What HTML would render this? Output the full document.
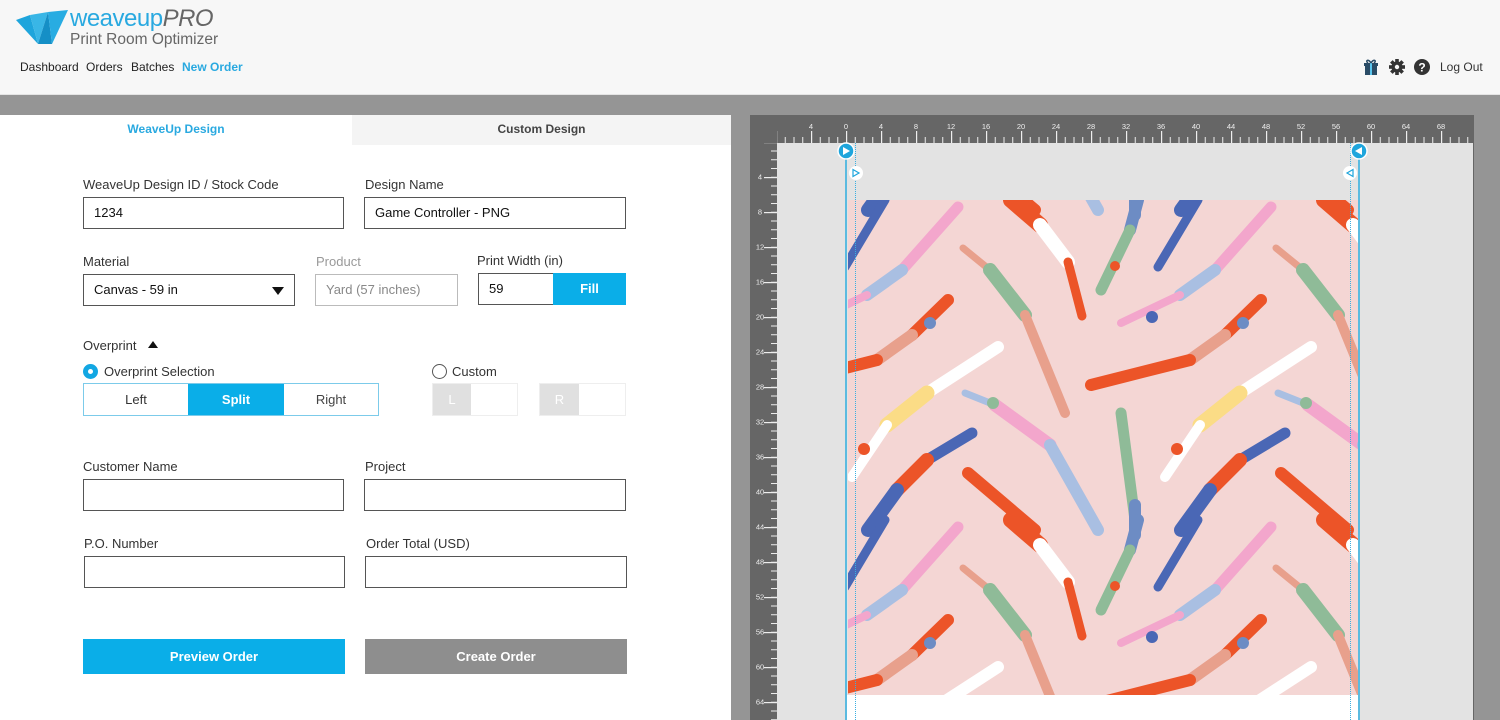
<!DOCTYPE html>
<html><head><meta charset="utf-8"><style>
*{box-sizing:border-box;margin:0;padding:0}
html,body{overflow:hidden}
body{width:1500px;height:720px;overflow:hidden;background:#959595;font-family:"Liberation Sans",Arial,sans-serif;position:relative;color:#333}
.a{position:absolute}
.hdr{left:0;top:0;width:1500px;height:95px;background:#f7f7f7;border-bottom:1px solid #e4e4e4}
.nav{top:60px;font-size:12px;color:#222}
.lp{left:0;top:115px;width:731px;height:605px;background:#fff}
.tab{top:115px;height:30px;font-size:12px;font-weight:bold;text-align:center;line-height:29px}
.lbl{font-size:13px;color:#333}
.in{border:1px solid #555;height:32px;background:#fff;font-size:13px;padding-left:10px;line-height:30px;color:#111}
.btn{height:35px;color:#fff;font-weight:bold;font-size:13px;text-align:center;line-height:35px}
</style></head><body>
<div class="a hdr"></div>
<svg class="a" style="left:14px;top:8px" width="56" height="40" viewBox="14 8 56 40">
<polygon points="16,20 30,15 38,44" fill="#1ea5dc"/>
<polygon points="30,15 48,12 38,44 " fill="#39b6e6"/>
<polygon points="38,44 48,12 52,44" fill="#158fc6"/>
<polygon points="48,12 68,10 52,44" fill="#28ace2"/>
</svg>
<div class="a" style="left:70px;top:6px;font-size:24px;line-height:26px;color:#29a9e0;letter-spacing:-0.5px">weaveup<i style="color:#666">PRO</i></div>
<div class="a" style="left:70px;top:31px;font-size:15.5px;line-height:18px;color:#666">Print Room Optimizer</div>
<div class="a nav" style="left:20px">Dashboard</div>
<div class="a nav" style="left:86px">Orders</div>
<div class="a nav" style="left:131px">Batches</div>
<div class="a nav" style="left:182px;color:#29a9e0;font-weight:bold">New Order</div>
<svg class="a" style="left:1362px;top:58px" width="70" height="18" viewBox="0 0 70 18">
<rect x="2" y="5" width="14" height="3" fill="#2a4c66"/><rect x="3" y="8" width="12" height="9" fill="#2a4c66"/><rect x="8" y="5" width="2" height="12" fill="#5bc6ee"/><path d="M9 5 C6 0 3 3 6 5 M9 5 C12 0 15 3 12 5" stroke="#2a4c66" stroke-width="1.5" fill="none"/>
<g transform="translate(35,9)" fill="#333"><circle r="5.5"/><g id="t"><rect x="-1.8" y="-8" width="3.6" height="16"/></g><use href="#t" transform="rotate(45)"/><use href="#t" transform="rotate(90)"/><use href="#t" transform="rotate(135)"/><circle r="2.2" fill="#f7f7f7"/></g>
<circle cx="60" cy="9" r="8" fill="#333"/><text x="60" y="13.5" font-size="12" font-weight="bold" fill="#fff" text-anchor="middle" font-family="Liberation Sans">?</text>
</svg>
<div class="a" style="left:1440px;top:60px;font-size:12px;color:#333">Log Out</div>

<div class="a lp"></div>
<div class="a tab" style="left:0;width:352px;color:#29a9e0">WeaveUp Design</div>
<div class="a tab" style="left:352px;width:379px;background:#f4f4f4;color:#444">Custom Design</div>

<div class="a lbl" style="left:83px;top:177px">WeaveUp Design ID / Stock Code</div>
<div class="a in" style="left:83px;top:197px;width:261px">1234</div>
<div class="a lbl" style="left:365px;top:177px">Design Name</div>
<div class="a in" style="left:364px;top:197px;width:262px">Game Controller - PNG</div>

<div class="a lbl" style="left:83px;top:254px">Material</div>
<div class="a in" style="left:83px;top:274px;width:212px">Canvas - 59 in<span class="a" style="right:10px;top:12px;border-left:6px solid transparent;border-right:6px solid transparent;border-top:8px solid #111"></span></div>
<div class="a lbl" style="left:316px;top:254px;color:#999">Product</div>
<div class="a in" style="left:315px;top:274px;width:143px;border-color:#bbb;color:#888">Yard (57 inches)</div>
<div class="a lbl" style="left:477px;top:253px">Print Width (in)</div>
<div class="a in" style="left:478px;top:273px;width:76px">59</div>
<div class="a btn" style="left:553px;top:273px;width:73px;height:32px;line-height:32px;background:#0aaee8">Fill</div>

<div class="a lbl" style="left:83px;top:338px">Overprint</div>
<div class="a" style="left:148px;top:341px;border-left:5px solid transparent;border-right:5px solid transparent;border-bottom:7px solid #111"></div>
<div class="a" style="left:83px;top:364px;width:15px;height:15px;border-radius:50%;background:#12a7e3"><div class="a" style="left:5px;top:5px;width:5px;height:5px;border-radius:50%;background:#fff"></div></div>
<div class="a lbl" style="left:104px;top:364px">Overprint Selection</div>
<div class="a" style="left:83px;top:383px;width:296px;height:33px;border:1px solid #7ccbea;font-size:13px">
<div class="a" style="left:0;top:0;width:104px;height:31px;line-height:31px;text-align:center">Left</div>
<div class="a" style="left:104px;top:0;width:96px;height:31px;line-height:31px;text-align:center;background:#0aaee8;color:#fff;font-weight:bold">Split</div>
<div class="a" style="left:200px;top:0;width:94px;height:31px;line-height:31px;text-align:center;color:#444">Right</div></div>
<div class="a" style="left:432px;top:364px;width:15px;height:15px;border-radius:50%;border:1px solid #555"></div>
<div class="a lbl" style="left:452px;top:364px">Custom</div>
<div class="a" style="left:432px;top:383px;width:86px;height:33px;border:1px solid #eee"><div class="a" style="left:0;top:0;width:38px;height:31px;background:#e0e0e0;color:#fff;text-align:center;line-height:31px;font-size:13px">L</div></div>
<div class="a" style="left:539px;top:383px;width:87px;height:33px;border:1px solid #eee"><div class="a" style="left:0;top:0;width:39px;height:31px;background:#e0e0e0;color:#fff;text-align:center;line-height:31px;font-size:13px">R</div></div>

<div class="a lbl" style="left:83px;top:459px">Customer Name</div>
<div class="a in" style="left:83px;top:479px;width:261px"></div>
<div class="a lbl" style="left:365px;top:459px">Project</div>
<div class="a in" style="left:364px;top:479px;width:262px"></div>
<div class="a lbl" style="left:84px;top:536px">P.O. Number</div>
<div class="a in" style="left:84px;top:556px;width:261px"></div>
<div class="a lbl" style="left:366px;top:536px">Order Total (USD)</div>
<div class="a in" style="left:365px;top:556px;width:262px"></div>
<div class="a btn" style="left:83px;top:639px;width:262px;background:#0aaee8">Preview Order</div>
<div class="a btn" style="left:365px;top:639px;width:262px;background:#8e8e8e">Create Order</div>

<!-- right panel -->
<div class="a" style="left:750px;top:115px;width:724px;height:605px;background:#666"></div>
<div class="a" style="left:777px;top:143px;width:696px;height:577px;background:#e3e3e3"></div>
<svg class="a" style="left:750px;top:115px" width="724" height="605" viewBox="0 0 724 605" font-family="Liberation Sans" font-size="7.5" fill="#eee">
<defs>
<pattern id="hm" patternUnits="userSpaceOnUse" x="8.5" y="0" width="8.75" height="28"><rect x="0" y="22" width="1" height="6" fill="#eee"/></pattern>
<pattern id="hM" patternUnits="userSpaceOnUse" x="26" y="0" width="35" height="28"><rect x="0" y="16" width="1.2" height="12" fill="#eee"/></pattern>
<pattern id="vm" patternUnits="userSpaceOnUse" x="0" y="0.5" width="27" height="8.75"><rect x="21" y="0" width="6" height="1" fill="#eee"/></pattern>
<pattern id="vM" patternUnits="userSpaceOnUse" x="0" y="27" width="27" height="35"><rect x="14" y="0" width="13" height="1.2" fill="#eee"/></pattern>
</defs>
<rect x="27" y="0" width="696" height="28" fill="url(#hm)"/>
<rect x="27" y="0" width="696" height="28" fill="url(#hM)"/>
<rect x="0" y="28" width="27" height="577" fill="url(#vm)"/>
<rect x="0" y="28" width="27" height="577" fill="url(#vM)"/>
<g text-anchor="middle">
<text x="61" y="14">4</text><text x="96" y="14">0</text><text x="131" y="14">4</text><text x="166" y="14">8</text><text x="201" y="14">12</text><text x="236" y="14">16</text><text x="271" y="14">20</text><text x="306" y="14">24</text><text x="341" y="14">28</text><text x="376" y="14">32</text><text x="411" y="14">36</text><text x="446" y="14">40</text><text x="481" y="14">44</text><text x="516" y="14">48</text><text x="551" y="14">52</text><text x="586" y="14">56</text><text x="621" y="14">60</text><text x="656" y="14">64</text><text x="691" y="14">68</text>
<text x="10" y="64.5">4</text><text x="10" y="99.5">8</text><text x="10" y="134.5">12</text><text x="10" y="169.5">16</text><text x="10" y="204.5">20</text><text x="10" y="239.5">24</text><text x="10" y="274.5">28</text><text x="10" y="309.5">32</text><text x="10" y="344.5">36</text><text x="10" y="379.5">40</text><text x="10" y="414.5">44</text><text x="10" y="449.5">48</text><text x="10" y="484.5">52</text><text x="10" y="519.5">56</text><text x="10" y="554.5">60</text><text x="10" y="589.5">64</text>
</g>
</svg>
<div class="a" style="left:847px;top:695px;width:511px;height:25px;background:#fff"></div>
<svg class="a" style="left:848px;top:200px" width="510" height="495" viewBox="848 200 510 495">
<defs>
<g id="sw" fill="none" stroke-linecap="round">
<path d="M1011 200 L1040 225" stroke="#ec5428" stroke-width="16"/><path d="M1040 225 L1068 262" stroke="#fff" stroke-width="14"/><path d="M1068 262 L1082 316" stroke="#ec5428" stroke-width="9"/>
<path d="M963 248 L990 270" stroke="#e8a08c" stroke-width="7"/><path d="M990 270 L1025 315" stroke="#8fbb98" stroke-width="14"/><path d="M1025 315 L1065 413" stroke="#e8a08c" stroke-width="10"/>
<path d="M1138 200 L1130 230" stroke="#6d8cc4" stroke-width="12"/><path d="M1130 230 L1101 290" stroke="#8fbb98" stroke-width="11"/><circle cx="1115" cy="266" r="5" fill="#ec5428"/>
<path d="M1198 200 L1158 267" stroke="#4a67b5" stroke-width="9"/>
<path d="M1271 207 L1215 270" stroke="#f3a6cc" stroke-width="11"/><path d="M1215 270 L1180 295" stroke="#a9bfe2" stroke-width="12"/><path d="M1180 295 L1121 323" stroke="#f3a6cc" stroke-width="8"/><circle cx="1152" cy="317" r="6" fill="#4a67b5"/>
<path d="M1261 300 L1225 335" stroke="#ec5428" stroke-width="12"/><path d="M1225 335 L1190 360" stroke="#e8a08c" stroke-width="12"/><path d="M1190 360 L1091 385" stroke="#ec5428" stroke-width="12"/><circle cx="1243" cy="323" r="6" fill="#6d8cc4"/>
<path d="M1311 347 L1240 393" stroke="#fff" stroke-width="12"/><path d="M1240 393 L1200 425" stroke="#fbdc86" stroke-width="15"/><path d="M1200 425 L1165 477" stroke="#fff" stroke-width="10"/><circle cx="1177" cy="449" r="6" fill="#ec5428"/>
<path d="M965 393 L995 405" stroke="#a9bfe2" stroke-width="7"/><path d="M995 405 L1050 445" stroke="#f3a6cc" stroke-width="13"/><path d="M1050 445 L1098 530" stroke="#a9bfe2" stroke-width="12"/><circle cx="993" cy="403" r="6" fill="#8fbb98"/>
<path d="M1121 413 L1135 520" stroke="#8fbb98" stroke-width="11"/><path d="M1135 505 L1135 535" stroke="#6d8cc4" stroke-width="12"/>
<path d="M1285 433 L1240 460" stroke="#4a67b5" stroke-width="11"/><path d="M1240 460 L1210 490" stroke="#ec5428" stroke-width="14"/><path d="M1210 490 L1181 530" stroke="#4a67b5" stroke-width="14"/>
<path d="M1281 473 L1348 530" stroke="#ec5428" stroke-width="12"/>
</g>
</defs>
<rect x="848" y="200" width="510" height="495" fill="#f4d6d4"/>
<use href="#sw" transform="translate(-626,-320)"/><use href="#sw" transform="translate(-313,-320)"/><use href="#sw" transform="translate(0,-320)"/><use href="#sw" transform="translate(313,-320)"/>
<use href="#sw" transform="translate(-626,0)"/><use href="#sw" transform="translate(-313,0)"/><use href="#sw"/><use href="#sw" transform="translate(313,0)"/>
<use href="#sw" transform="translate(-626,320)"/><use href="#sw" transform="translate(-313,320)"/><use href="#sw" transform="translate(0,320)"/><use href="#sw" transform="translate(313,320)"/>
</svg>
<!-- guide lines -->
<div class="a" style="left:845px;top:150px;width:2px;height:570px;background:#5bbbe0"></div>
<div class="a" style="left:1358px;top:150px;width:2px;height:570px;background:#5bbbe0"></div>
<div class="a" style="left:855px;top:143px;height:577px;border-left:1px dotted #3aaee0"></div>
<div class="a" style="left:1350px;top:143px;height:577px;border-left:1px dotted #3aaee0"></div>
<svg class="a" style="left:836px;top:142px" width="534" height="40" viewBox="836 142 534 40">
<circle cx="846" cy="151" r="8" fill="#1ea5dc" stroke="#fff" stroke-width="1.5"/><polygon points="843,147 843,155 850,151" fill="#fff"/>
<circle cx="1359" cy="151" r="8" fill="#1ea5dc" stroke="#fff" stroke-width="1.5"/><polygon points="1362,147 1362,155 1355,151" fill="#fff"/>
<circle cx="856" cy="173" r="7" fill="#fff"/><polygon points="853,169.5 853,176.5 859,173" fill="none" stroke="#1ea5dc" stroke-width="1.2"/>
<circle cx="1350" cy="173" r="7" fill="#fff"/><polygon points="1353,169.5 1353,176.5 1347,173" fill="none" stroke="#1ea5dc" stroke-width="1.2"/>
</svg>
</body></html>
